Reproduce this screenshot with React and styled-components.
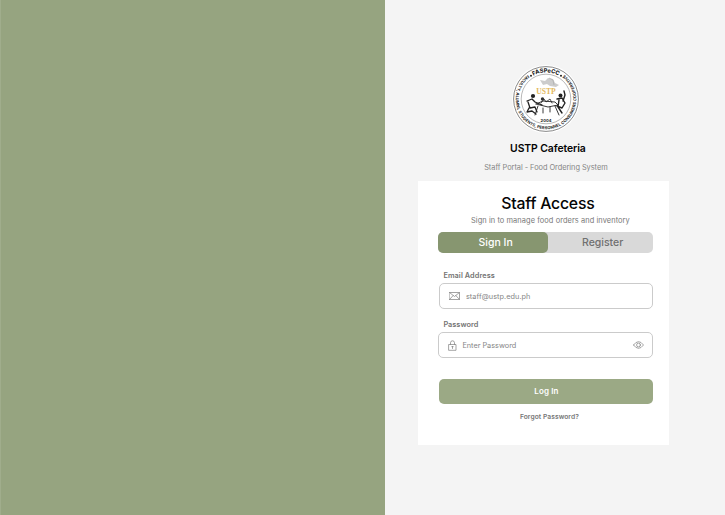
import React from "react";
import styled, { createGlobalStyle } from "styled-components";

const GlobalStyle = createGlobalStyle`
  * { box-sizing: border-box; }
  body { margin: 0; font-family: "Inter", "Open Sans", sans-serif; }
  button, input { font-family: inherit; margin: 0; }
`;

const Page = styled.main`
  display: grid;
  grid-template-columns: 385px 1fr;
  width: 725px;
  height: 515px;
  overflow: hidden;
  background: #f4f4f4;
`;

const BrandPanel = styled.section`
  background: #96a480;
  border-left: 1px solid #a0ad8c;
`;

const Portal = styled.section`
  display: flex;
  flex-direction: column;
  width: 251px;
  margin-left: 33.4px;
  padding-top: 65px;
`;

const Line = styled.div`
  width: max-content;
  margin: 0;
  white-space: nowrap;
  font-size: ${(p) => p.$size}px;
  font-weight: ${(p) => p.$weight || 400};
  letter-spacing: ${(p) => p.$track || 0}px;
  color: ${(p) => p.$color || "#858585"};
  line-height: ${(p) => p.$height}px;
`;

const Header = styled.header`
  display: flex;
  flex-direction: column;
  align-items: center;
  height: 116px;
  padding-left: 4px;
`;

const Seal = styled.svg`
  flex: none;
  width: 68px;
  height: 68px;
  margin-bottom: 8px;
`;

const Brand = styled(Line)`
  margin-left: 4px;
`;

const Subtitle = styled(Line)`
  margin-top: 6px;
`;

const Card = styled.section`
  display: flex;
  flex-direction: column;
  height: 264px;
  padding: 11px 16px 0 20px;
  background: #fff;
  flex-shrink: 0;
`;

const CardHeading = styled.div`
  display: flex;
  flex-direction: column;
  align-items: center;
  height: 40px;
`;

const CardTitle = styled(Line)`
  margin-left: 4px;
`;

const CardHint = styled(Line)`
  margin-left: 9px;
`;

const Tabs = styled.div`
  display: flex;
  height: 21px;
  border-radius: 5px;
  background: #d9d9d9;
`;

const Tab = styled.button`
  width: ${(p) => (p.$active ? 109.5 : 105.5)}px;
  height: 21px;
  padding: 0 0 0 ${(p) => (p.$active ? 5 : 4)}px;
  border: 0;
  border-radius: 5px;
  background: ${(p) => (p.$active ? "#879670" : "transparent")};
  color: ${(p) => (p.$active ? "#fff" : "#707070")};
  font-size: 10.5px;
  font-weight: 500;
  line-height: 20px;
`;

const Label = styled(Line)`
  margin: ${(p) => p.$top}px 0 0 5px;
`;

const Field = styled.label`
  display: flex;
  align-items: center;
  height: 26px;
  margin-top: ${(p) => p.$top}px;
  margin-left: ${(p) => p.$left || 0}px;
  padding: 0 8px 0 9px;
  border: 1px solid #cbcbcb;
  border-radius: 5px;
  background: #fff;
`;

const Input = styled.input`
  flex: 1;
  min-width: 0;
  padding: 0;
  margin-left: ${(p) => p.$gap}px;
  border: 0;
  outline: 0;
  background: transparent;
  font-size: 7.3px;
  letter-spacing: ${(p) => p.$track}px;
  color: #858585;
  &::placeholder { color: #858585; opacity: 1; }
`;

const LineIcon = styled.svg`
  flex: none;
  fill: none;
  stroke: #858585;
  stroke-width: 0.75;
  stroke-linecap: round;
  stroke-linejoin: round;
`;

const LoginButton = styled.button`
  height: 25px;
  margin: 20.6px 0 0 1px;
  padding: 0;
  border: 0;
  border-radius: 5px;
  background: #9ba985;
  color: #fff;
  font-size: 8px;
  font-weight: 600;
  letter-spacing: 0.1px;
  line-height: 25px;
`;

const Forgot = styled(Line)`
  align-self: center;
  margin: 8px 0 0 7px;
`;

function CafeteriaSeal() {
  return (
    <Seal viewBox="0 0 68 68" aria-label="FASPeCC seal">
      <defs>
        <path id="sealTop" d="M15.2 15.2A26.6 26.6 0 0 1 52.8 15.2" />
        <path id="sealRing" d="M16.6 9.2A30.3 30.3 0 1 0 51.4 9.2" />
      </defs>
      <circle cx="34" cy="34" r="34" fill="#fff" />
      <circle cx="34" cy="34" r="32.4" fill="none" stroke="#555" strokeWidth=".7" />
      <circle cx="34" cy="34" r="24.8" fill="none" stroke="#888" strokeWidth=".6" />
      <g fontWeight="700" fill="#1f1f1f">
        <text fontSize="5.7" fontWeight="800" textAnchor="middle">
          <textPath href="#sealTop" startOffset="50%">FASPeCC</textPath>
        </text>
        <text fontSize="4.1">
          <textPath href="#sealRing" startOffset="1" textLength="151">FACULTY, ALUMNI, STUDENTS, PERSONNEL CONSUMERS COOPERATIVE</textPath>
        </text>
      </g>
      <circle cx="19" cy="10.8" r="1" fill="#222" />
      <circle cx="49" cy="10.8" r="1" fill="#222" />
      <path d="M28 15l5 1 3-3 5 1 2 4 4 2-3 2-6-1-3-2-4 1z" fill="#ccc" />
      <path d="M37 13l4 2 1 5" fill="none" stroke="#aaa" strokeWidth=".7" />
      <text x="34" y="29.4" textAnchor="middle" fontSize="7.6" fontFamily="Liberation Serif, serif" fontWeight="700" fill="#e3b85d">USTP</text>
      <g stroke="#222" fill="none" strokeLinecap="round" strokeLinejoin="round">
        <path d="M15 36l5-2 3 3 7 3M16 37l2 6 5-1 2 5M17 43l-2 4 5-1 4 3" strokeWidth="1.3" />
        <path d="M24 39l7-3 12 1 3 3-10 2-12-3M26 41l-3 9M43 41l4 9M31 43v5M38 42v5" strokeWidth=".9" />
        <path d="M45 34l5-1 3 5-3 5-5-2M47 35l-1 7 4 6M51 36l2-6-1-4" strokeWidth="1.4" />
        <path d="M29 38l3-4 2 3 4-3 2 4" strokeWidth=".8" />
      </g>
      <circle cx="21" cy="31" r="2.1" fill="#222" />
      <circle cx="30.5" cy="34" r="1.7" fill="#333" />
      <circle cx="48.5" cy="30.5" r="2" fill="#222" />
      <text x="34" y="56.8" textAnchor="middle" fontSize="4.1" fontWeight="700" fill="#222">2004</text>
    </Seal>
  );
}

export default function App() {
  return (
    <>
      <GlobalStyle />
      <Page>
        <BrandPanel />
        <Portal>
          <Header>
            <CafeteriaSeal />
            <Brand as="h1" $size={10.4} $weight={600} $height={15} $color="#050505" $track={-0.08}>USTP Cafeteria</Brand>
            <Subtitle $size={7.4} $height={12} $track={-0.04}>Staff Portal - Food Ordering System</Subtitle>
          </Header>
          <Card>
            <CardHeading>
              <CardTitle as="h2" $size={15.8} $weight={500} $height={24} $color="#050505" $track={-0.22}>Staff Access</CardTitle>
              <CardHint $size={7.4} $height={10} $color="#777" $track={0.09}>Sign in to manage food orders and inventory</CardHint>
            </CardHeading>
            <Tabs>
              <Tab $active>Sign In</Tab>
              <Tab>Register</Tab>
            </Tabs>
            <Label $top={18} $size={7.3} $weight={600} $height={10} $color="#737373" $track={0.1}>Email Address</Label>
            <Field $top={2} $left={1}>
              <LineIcon width="11" height="8" viewBox="0 0 11 8">
                <path d="M.5.5h10v7H.5zM.5.5l5 4 5-4M.5 7.5l3.7-4M10.5 7.5l-3.7-4" />
              </LineIcon>
              <Input $gap={5.5} $track={0.06} placeholder="staff@ustp.edu.ph" />
            </Field>
            <Label $top={11} $size={7.3} $weight={600} $height={10} $color="#737373" $track={0.04}>Password</Label>
            <Field $top={2}>
              <LineIcon width="9" height="11" viewBox="0 0 9 11">
                <path d="M1 4.5h7v5.8H1zM2.5 4.5V2.8a2 2 0 0 1 4 0v1.7M4.5 6.5v2M3.8 6.6h1.4" />
              </LineIcon>
              <Input $gap={5} $track={0} type="password" placeholder="Enter Password" />
              <LineIcon width="11" height="8" viewBox="0 0 11 8">
                <path d="M.5 4Q5.5-2.8 10.5 4 5.5 10.8.5 4z" />
                <circle cx="5.5" cy="4" r="1.9" />
              </LineIcon>
            </Field>
            <LoginButton>Log In</LoginButton>
            <Forgot $size={6.7} $weight={600} $height={11} $color="#777" $track={0.06}>Forgot Password?</Forgot>
          </Card>
        </Portal>
      </Page>
    </>
  );
}
